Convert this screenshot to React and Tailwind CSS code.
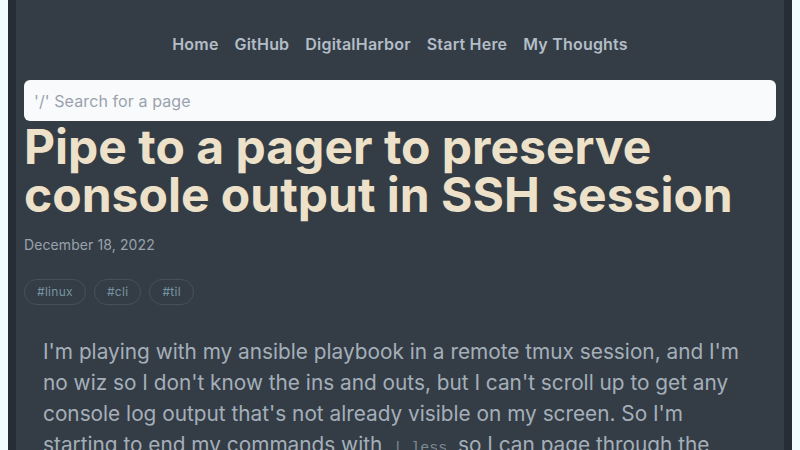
const navLinks = ["Home", "GitHub", "DigitalHarbor", "Start Here", "My Thoughts"];
const tags = ["#linux", "#cli", "#til"];

const App = () => {
  return (
    <div
      className="min-h-screen bg-[#f0fcfe] px-2"
      style={{ fontFamily: "Inter, 'Noto Sans', sans-serif" }}
    >
      <div className="min-h-screen bg-[#262d35] px-2">
        <div className="min-h-screen bg-[#343d46] px-2">
          <nav className="flex justify-center gap-4 pt-[33px] pb-[25px]">
            {navLinks.map((link) => (
              <a
                key={link}
                href="#"
                className="text-base font-semibold leading-[22px] tracking-[0.2px] text-[#b3bdc7]"
              >
                {link}
              </a>
            ))}
          </nav>

          <div className="flex h-[41px] items-center rounded-md bg-[#f8fafc] px-[10px]">
            <span className="text-base tracking-[0.1px] text-[#9aa2ad]">'/' Search for a page</span>
          </div>

          <article className="pt-[2px]">
            <h1 className="text-5xl font-bold leading-[48px] text-[#ede1c9]">
              Pipe to a pager to preserve console output in SSH session
            </h1>

            <p className="mt-[16px] text-sm leading-5 tracking-[0.1px] text-[#98a2ac]">
              December 18, 2022
            </p>

            <div className="mt-[24px] flex gap-2">
              {tags.map((tag) => (
                <span
                  key={tag}
                  className="rounded-full border border-[#45505a] px-3 py-1 text-xs leading-4 tracking-[0.3px] text-[#7794a1]"
                >
                  {tag}
                </span>
              ))}
            </div>

            <p className="mt-[31px] px-[19px] text-[20.8px] leading-[31px] text-[#a5afb9]">
              I'm playing with my ansible playbook in a remote tmux session, and
              I'm no wiz so I don't know the ins and outs, but I can't scroll up
              to get any console log output that's not already visible on my
              screen. So I'm starting to end my commands with{" "}
              <code
                className="px-[5px] text-[15px] text-[#7d8a93]"
                style={{ fontFamily: "'Liberation Mono', monospace" }}
              >
                | less
              </code>{" "}
              so I can page through the output.
            </p>
          </article>
        </div>
      </div>
    </div>
  );
};

export default App;
